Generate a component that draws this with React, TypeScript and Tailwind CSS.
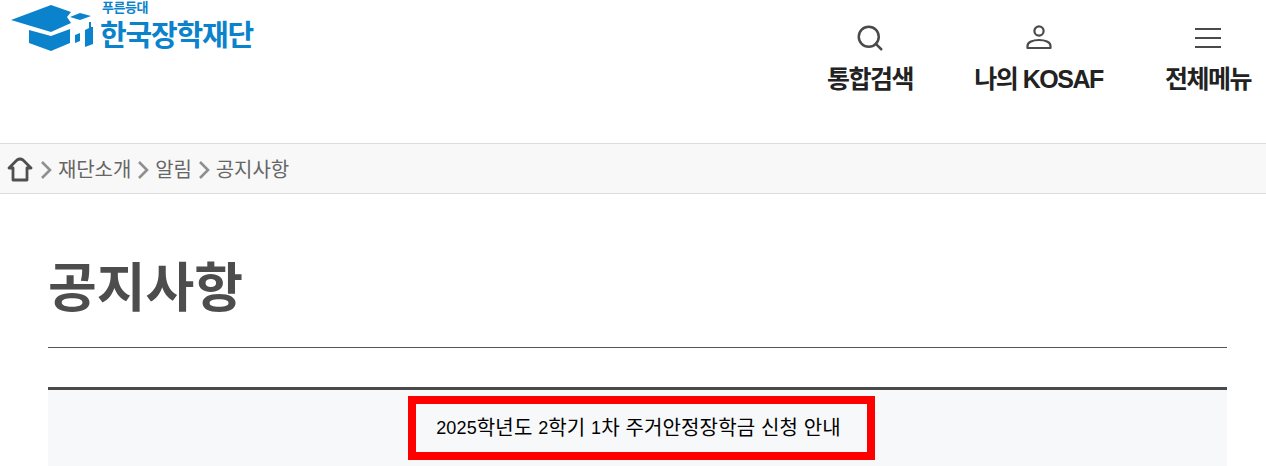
import { Search } from 'lucide-react';

const font = 'font-["Liberation_Sans","Noto_Sans_CJK_KR",sans-serif]';

function Logo() {
  return (
    <div className="flex items-start">
      <svg width="90" height="52" viewBox="0 0 90 52" className="ml-[11px] mt-[2px] shrink-0">
        <path d="M0 18 L40 3 L60 10 L56 15 L60 21 L40 30 Z" fill="#0a82cc" />
        <path d="M18 28 L40 34 L59 27 L59 41 L40 49 L18 41 Z" fill="#0a82cc" />
        <path d="M59 15 L69 11 L80 14 L69 18 Z" fill="#0a82cc" />
        <path d="M64 33 L69 31 L69 39 L64 41 Z" fill="#0a82cc" />
        <path d="M74 28 L78 26 L78 20 L80 20 L80 25 L82 25 L82 42 L74 45 Z" fill="#0a82cc" />
      </svg>
      <div className="flex flex-col ml-[-1px]">
        <span className="text-[13px] leading-[14px] font-bold text-[#0a82cc] tracking-[-0.5px] ml-[2px] mt-[1px]">푸른등대</span>
        <span className="text-[29px] leading-[34px] font-bold text-[#0a82cc] tracking-[-1.2px] mt-[4px]">한국장학재단</span>
      </div>
    </div>
  );
}

function NavItem({ icon, label, width }: { icon: React.ReactNode; label: string; width: string }) {
  return (
    <div className={`flex flex-col items-center ${width}`}>
      <div className="h-[28px] flex items-center justify-center text-[#4a4a4a]">{icon}</div>
      <span className="mt-[10px] text-[25px] leading-[34px] font-bold text-[#222] tracking-[-1.5px] whitespace-nowrap">{label}</span>
    </div>
  );
}

function Chevron() {
  return (
    <svg width="14" height="20" viewBox="0 0 14 20" fill="none" stroke="#8f8f8f" strokeWidth="2.6" className="shrink-0">
      <path d="M3 2 L11 10 L3 18" />
    </svg>
  );
}

function Crumb({ label }: { label: string }) {
  return (
    <>
      <Chevron />
      <span className="mx-[5px]">{label}</span>
    </>
  );
}

export default function App() {
  return (
    <div className={`w-[1266px] h-[466px] overflow-hidden bg-white ${font}`}>
      <header className="h-[143px] flex justify-between">
        <Logo />
        <nav className="flex pt-[24px] pr-[15px] gap-[61px]">
          <NavItem width="w-[86px]" label="통합검색" icon={<Search size={30} strokeWidth={2} />} />
          <NavItem width="w-[129px]" label="나의 KOSAF" icon={
            <svg width="28" height="28" viewBox="0 0 28 28" fill="none" stroke="currentColor" strokeWidth="2.2">
              <circle cx="14" cy="7" r="4.6" />
              <path d="M2.5 24 L2.5 22 C2.5 18 8 16 14 16 C20 16 25.5 18 25.5 22 L25.5 24 Z" strokeLinejoin="round" />
            </svg>
          } />
          <div className="ml-[1px]">
            <NavItem width="w-[86px]" label="전체메뉴" icon={
              <svg width="28" height="28" viewBox="0 0 28 28" fill="none" stroke="currentColor" strokeWidth="2.2">
                <path d="M1 5 H27 M1 14 H27 M1 23 H27" />
              </svg>
            } />
          </div>
        </nav>
      </header>

      <div className="h-[51px] bg-[#f8f8f8] border-y border-[#dcdcdc] flex items-center pl-[7px] pt-[2px] text-[20px] text-[#666] tracking-[-0.1px]">
        <svg width="26" height="26" viewBox="0 0 26 26" fill="none" stroke="#4f4f4f" strokeWidth="2.8" className="shrink-0 mr-[6px]">
          <path d="M2 11 L10 3 Q13 1 16 3 L24 11 L20 11 L20 23 L6 23 L6 11 Z" strokeLinejoin="round" />
        </svg>
        <Crumb label="재단소개" />
        <Crumb label="알림" />
        <Crumb label="공지사항" />
      </div>

      <main className="pl-[48px] pr-[39px]">
        <h1 className="h-[154px] pt-[59px] border-b border-[#555] text-[53px] leading-[72px] font-bold text-[#4d4d4d]">
          공지사항
        </h1>
        <div className="mt-[39px] border-t-[3px] border-[#4a4a4a] bg-[#f7f8fa] h-[80px] pt-[6px] pl-[8px] flex justify-center">
          <div className="w-[467px] h-[64px] border-[8px] border-[#ff0000] pr-[6px] flex items-center justify-center text-[20px] text-black tracking-[0.14px] whitespace-nowrap">
            <span className="text-[18px]">2025</span>학년도&nbsp;<span className="text-[18px]">2</span>학기&nbsp;<span className="text-[18px]">1</span>차 주거안정장학금 신청 안내
          </div>
        </div>
      </main>
    </div>
  );
}
